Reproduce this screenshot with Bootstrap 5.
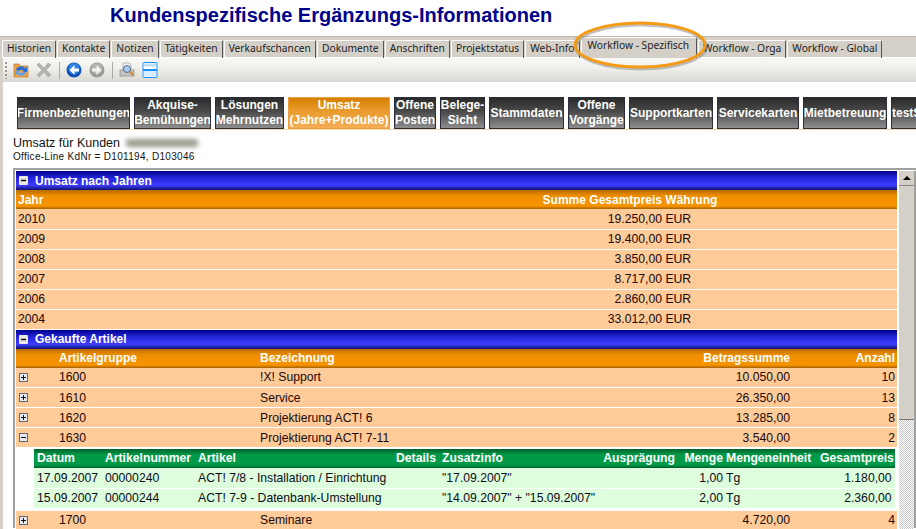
<!DOCTYPE html>
<html lang="de"><head><meta charset="utf-8"><title>Kundenspezifische Ergänzungs-Informationen</title>
<link href="https://cdn.jsdelivr.net/npm/bootstrap@5.3.0/dist/css/bootstrap.min.css" rel="stylesheet">
<style>
html,body{height:529px;overflow:hidden;background:#fff}
body{font:12px "Liberation Sans",Arial,sans-serif;color:#111;position:relative}
.page-title{font:bold 20px/1 "Liberation Sans",Arial,sans-serif;color:#00008b;margin:0;padding:5px 0 0 110px;height:36px}
.tabstrip{background:#d4d0c8;height:21px;padding:3px 0 0 2px;border-top:1px solid #bdb9af;flex-wrap:nowrap}
.tabstrip .nav-link{font:10.25px/14px "Noto Sans",sans-serif;color:#222;padding:0 4px;height:18px;margin-right:1px;border-top:1px solid #fff;border-left:1px solid #fff;border-right:1px solid #555;border-radius:2px 2px 0 0;white-space:nowrap}
.tabstrip .tab-on{margin:-3px 1px 0 0;height:21px;padding:1px 7px 0 6px;line-height:13px;background:#d4d0c8}
.shell{border-left:3px solid #d4d0c8;height:472px;overflow:hidden}
.toolrow{height:25px;background:linear-gradient(#f8f8f6,#eeeeea 45%,#d9d8d2);border-top:1px solid #fff;padding-left:2px}
.grip{width:2px;height:17px;margin-right:3px;background:repeating-linear-gradient(#999 0 2px,transparent 2px 4px)}
.tool{display:block;width:16px;height:16px;margin:0 3px}
.sep{width:1px;height:17px;background:#aaa;margin:0 3px}
.btnrow{padding:15px 0 0 14px;height:47px;gap:4px;flex-wrap:nowrap}
.menu-btn{flex:none;display:flex;align-items:center;justify-content:center;text-align:center;height:32px;padding:0;color:#fff;text-decoration:none;white-space:nowrap;overflow:hidden;font:bold 12px/15px "Liberation Sans",Arial,sans-serif;background:linear-gradient(#2b2b2b,#4a4a4a 45%,#8d8d8d);border:1px solid #2c2c3a;border-radius:0}
.menu-btn.on{background:linear-gradient(#d47f00,#e89a2a 40%,#f5ad55);border-color:#e8a040}
.b42{width:42px}.b45{width:45px}.b50{width:50px}.b57{width:57px}.b69{width:69px}.b75{width:75px}.b77{width:77px}.b82{width:82px}.b84{width:84px}.b102{width:102px}.b113{width:113px}
.rule{height:1px;background:#f2d9a8;margin-left:14px}
.cust{padding:6px 0 0 10px;height:38px}
.cust-name{font-size:12.5px;line-height:14px;display:flex;align-items:center}
.smudge{display:inline-block;width:72px;height:8px;margin-left:6px;background:#9a9a8e;filter:blur(2.5px);border-radius:3px}
.kd{font-size:10px;line-height:14px;letter-spacing:.3px}
.panel{margin-left:10px;border-top:2px solid #a0a0a0;border-left:2px solid #a0a0a0;height:360px;padding:1px 0 0 1px}
.scroll-col{width:17px;margin-left:2px;background:#d4d0c8;border-right:2px solid #a0a0a0}
.scroll-up{height:15px;border-bottom:1px solid #888;display:flex;align-items:center;justify-content:center}
.arrow{width:0;height:0;border:4px solid transparent;border-top:0;border-bottom:4px solid #000}
.thumb{height:234px;background:#d4d0c8;border-bottom:1px solid #777}
.track{height:200px;background:repeating-conic-gradient(#c8c8c8 0 25%,#fff 0 50%) 0 0/2px 2px}
.data{width:881px;flex:none}
.band{height:19px;line-height:18px;color:#fff;font-weight:bold;font-size:12px;background:linear-gradient(#00008a,#2424d8 35%,#3c3cff 75%,#10106a);padding-left:3px;display:flex;align-items:center;gap:7px}
.t{width:100%;table-layout:fixed;border-collapse:collapse;font-size:12.2px}
.t th{height:19px;padding:0;color:#fff;font-weight:bold;font-size:12px;line-height:1;background:linear-gradient(#b86a00,#ee8e00 30%,#f79400 85%,#a55f00);white-space:nowrap}
.t td{height:20px;padding:0;background:#fecb99;border-bottom:1px solid #fff;white-space:nowrap;color:#200808}
.s{display:block;margin-left:3px}
.nest-wrap{padding:1px 2px 2px 18px;background:#fff}
.nest th{font-size:12.2px;background:linear-gradient(#00602c,#009a48 30%,#009a48 85%,#005c2a)}
.nest td{background:#ddfddd;color:#0c0c20}
.ring{position:absolute;left:570px;top:18px;width:142px;height:56px;pointer-events:none}
.r{text-align:right}
.pe2{padding-right:2px!important}
.c2{width:2px}.c3{width:3px}.c6{width:6px}.c40{width:40px}.c43{width:43px}.c48{width:48px}.c68{width:68px}.c93{width:93px}.c94{width:94px}.c120{width:120px}.c130{width:130px}.c198{width:198px}.c201{width:201px}.c233{width:233px}.c400{width:400px}.c524{width:524px}
</style></head><body>
<h1 class="page-title">Kundenspezifische Ergänzungs-Informationen</h1>
<ul class="nav tabstrip">
<li class="nav-item"><a class="nav-link" href="#">Historien</a></li>
<li class="nav-item"><a class="nav-link" href="#">Kontakte</a></li>
<li class="nav-item"><a class="nav-link" href="#">Notizen</a></li>
<li class="nav-item"><a class="nav-link" href="#">Tätigkeiten</a></li>
<li class="nav-item"><a class="nav-link" href="#">Verkaufschancen</a></li>
<li class="nav-item"><a class="nav-link" href="#">Dokumente</a></li>
<li class="nav-item"><a class="nav-link" href="#">Anschriften</a></li>
<li class="nav-item"><a class="nav-link" href="#">Projektstatus</a></li>
<li class="nav-item"><a class="nav-link" href="#">Web-Info</a></li>
<li class="nav-item"><a class="nav-link tab-on" href="#">Workflow - Spezifisch</a></li>
<li class="nav-item"><a class="nav-link" href="#">Workflow - Orga</a></li>
<li class="nav-item"><a class="nav-link" href="#">Workflow - Global</a></li>
</ul>
<div class="shell">
<div class="toolrow d-flex align-items-center">
<span class="grip"></span>
<svg class="tool" viewBox="0 0 16 16"><path d="M1 2h5l1 2h8v11H1z" fill="#eda552" stroke="#c07820" stroke-width=".7"/><path d="M3 8a5 4 0 0 1 9-2l2-1v5H9l2-1a3 2 0 0 0-5 0z" fill="#2a6fd0"/><path d="M13 10a5 4 0 0 1-9 2l-2 1V9h5l-2 1a3 2 0 0 0 5 0z" fill="#5fa0e8"/></svg>
<svg class="tool ms-1" viewBox="0 0 16 16"><path d="M3 1l5 5 4-5 3 2-5 5 5 5-3 2-4-5-5 5-2-2 5-5-5-5z" fill="#b4b4ae" stroke="#999" stroke-width=".5"/></svg>
<span class="sep ms-1"></span>
<svg class="tool" viewBox="0 0 16 16"><circle cx="8" cy="8" r="7.500" fill="#0f55b8"/><circle cx="8" cy="6.500" r="5.500" fill="#2f83e4"/><path d="M8.500 3L3.500 8l5 5V9.500H13v-3H8.500z" fill="#fff"/></svg>
<svg class="tool ms-1" viewBox="0 0 16 16"><circle cx="8" cy="8" r="7.500" fill="#9a9a96"/><circle cx="8" cy="6.500" r="5.500" fill="#b4b4b0"/><path d="M7.500 3l5 5-5 5V9.500H3v-3h4.500z" fill="#f4f4f4"/></svg>
<span class="sep ms-1"></span>
<svg class="tool" viewBox="0 0 16 16"><path d="M4 1h6l2 2v5H4z" fill="#f4f4f4" stroke="#999" stroke-width=".7"/><rect x="1" y="8" width="14" height="6" fill="#c4c4c0" stroke="#888" stroke-width=".7"/><circle cx="8" cy="7" r="3.500" fill="#a9cdf0" stroke="#55708c"/><path d="M11 10l3 3" stroke="#d08030" stroke-width="2"/></svg>
<svg class="tool ms-1" viewBox="0 0 16 16"><rect x="1" y=".5" width="14" height="15" rx="1" fill="#fff" stroke="#1e90ff"/><rect x="2" y="1.500" width="12" height="3" fill="#bfe0ff"/><rect x="1" y="7" width="14" height="2" fill="#1e90ff"/><rect x="2" y="9" width="12" height="5.500" fill="#d8ecff"/></svg>
</div>
<div class="d-flex btnrow">
<a class="menu-btn b113" href="#">Firmenbeziehungen</a>
<a class="menu-btn b77" href="#">Akquise-<br>Bemühungen</a>
<a class="menu-btn b69" href="#">Lösungen<br>Mehrnutzen</a>
<a class="menu-btn on b102" href="#">Umsatz<br>(Jahre+Produkte)</a>
<a class="menu-btn b42" href="#">Offene<br>Posten</a>
<a class="menu-btn b45" href="#">Belege-<br>Sicht</a>
<a class="menu-btn b75" href="#">Stammdaten</a>
<a class="menu-btn b57" href="#">Offene<br>Vorgänge</a>
<a class="menu-btn b84" href="#">Supportkarten</a>
<a class="menu-btn b82" href="#">Servicekarten</a>
<a class="menu-btn b84" href="#">Mietbetreuung</a>
<a class="menu-btn justify-content-start b50" href="#">testS</a>
</div>
<div class="rule"></div>
<div class="cust">
<div class="cust-name">Umsatz für Kunden <span class="smudge"></span></div>
<div class="kd">Office-Line KdNr = D101194, D103046</div>
</div>
<div class="panel d-flex">
<div class="data">
<div class="band"><svg width="9" height="9" viewBox="0 0 9 9"><rect width="9" height="9" rx="1" fill="#e8e8e0"/><path d="M2 4.500h5" stroke="#111" stroke-width="1.500"/></svg><span>Umsatz nach Jahren</span></div>
<table class="t">
<colgroup><col class="c2"><col class="c524"><col class="c120"><col></colgroup>
<thead><tr><th></th><th>Jahr</th><th class="r">Summe Gesamtpreis</th><th>&nbsp;Währung</th></tr></thead>
<tbody>
<tr><td></td><td>2010</td><td class="r">19.250,00</td><td>&nbsp;EUR</td></tr>
<tr><td></td><td>2009</td><td class="r">19.400,00</td><td>&nbsp;EUR</td></tr>
<tr><td></td><td>2008</td><td class="r">3.850,00</td><td>&nbsp;EUR</td></tr>
<tr><td></td><td>2007</td><td class="r">8.717,00</td><td>&nbsp;EUR</td></tr>
<tr><td></td><td>2006</td><td class="r">2.860,00</td><td>&nbsp;EUR</td></tr>
<tr><td></td><td>2004</td><td class="r">33.012,00</td><td>&nbsp;EUR</td></tr>
</tbody></table>
<div class="band"><svg width="9" height="9" viewBox="0 0 9 9"><rect width="9" height="9" rx="1" fill="#e8e8e0"/><path d="M2 4.500h5" stroke="#111" stroke-width="1.500"/></svg><span>Gekaufte Artikel</span></div>
<table class="t">
<colgroup><col class="c43"><col class="c201"><col class="c400"><col class="c130"><col></colgroup>
<thead><tr><th></th><th>Artikelgruppe</th><th>Bezeichnung</th><th class="r">Betragssumme</th><th class="r pe2">Anzahl</th></tr></thead>
<tbody>
<tr><td><svg class="s" width="9" height="9" viewBox="0 0 9 9"><rect x=".5" y=".5" width="8" height="8" fill="#e8e8f0" stroke="#667"/><path d="M2 4.500h5M4.500 2v5" stroke="#111"/></svg></td><td>1600</td><td>!X! Support</td><td class="r">10.050,00</td><td class="r pe2">10</td></tr>
<tr><td><svg class="s" width="9" height="9" viewBox="0 0 9 9"><rect x=".5" y=".5" width="8" height="8" fill="#e8e8f0" stroke="#667"/><path d="M2 4.500h5M4.500 2v5" stroke="#111"/></svg></td><td>1610</td><td>Service</td><td class="r">26.350,00</td><td class="r pe2">13</td></tr>
<tr><td><svg class="s" width="9" height="9" viewBox="0 0 9 9"><rect x=".5" y=".5" width="8" height="8" fill="#e8e8f0" stroke="#667"/><path d="M2 4.500h5M4.500 2v5" stroke="#111"/></svg></td><td>1620</td><td>Projektierung ACT! 6</td><td class="r">13.285,00</td><td class="r pe2">8</td></tr>
<tr><td><svg class="s" width="9" height="9" viewBox="0 0 9 9"><rect x=".5" y=".5" width="8" height="8" fill="#e8e8f0" stroke="#667"/><path d="M2 4.500h5" stroke="#111"/></svg></td><td>1630</td><td>Projektierung ACT! 7-11</td><td class="r">3.540,00</td><td class="r pe2">2</td></tr>
</tbody></table>
<div class="nest-wrap">
<table class="t nest">
<colgroup><col class="c3"><col class="c68"><col class="c93"><col class="c198"><col class="c40"><col class="c6"><col class="c233"><col class="c48"><col class="c3"><col class="c94"><col></colgroup>
<thead><tr><th></th><th>Datum</th><th>Artikelnummer</th><th>Artikel</th><th class="r">Details</th><th></th><th>Zusatzinfo<span class="float-end">Ausprägung</span></th><th class="r">Menge</th><th></th><th>Mengeneinheit</th><th class="r">Gesamtpreis&nbsp;</th></tr></thead>
<tbody>
<tr><td></td><td>17.09.2007</td><td>00000240</td><td>ACT! 7/8 - Installation / Einrichtung</td><td></td><td></td><td>"17.09.2007"</td><td class="r">1,00</td><td></td><td>Tg</td><td class="r">1.180,00&nbsp;</td></tr>
<tr><td></td><td>15.09.2007</td><td>00000244</td><td>ACT! 7-9 - Datenbank-Umstellung</td><td></td><td></td><td>"14.09.2007" + "15.09.2007"</td><td class="r">2,00</td><td></td><td>Tg</td><td class="r">2.360,00&nbsp;</td></tr>
</tbody></table>
</div>
<table class="t">
<colgroup><col class="c43"><col class="c201"><col class="c400"><col class="c130"><col></colgroup>
<tbody><tr><td><svg class="s" width="9" height="9" viewBox="0 0 9 9"><rect x=".5" y=".5" width="8" height="8" fill="#e8e8f0" stroke="#667"/><path d="M2 4.500h5M4.500 2v5" stroke="#111"/></svg></td><td>1700</td><td>Seminare</td><td class="r">4.720,00</td><td class="r pe2">4</td></tr></tbody></table>
</div>
<div class="scroll-col">
<div class="scroll-up"><span class="arrow"></span></div>
<div class="thumb"></div>
<div class="track"></div>
</div>
</div>
</div>
<svg class="ring" viewBox="0 0 142 56"><ellipse cx="71" cy="29" rx="65" ry="22" fill="none" stroke="#777" stroke-opacity=".45" stroke-width="3"/><ellipse cx="70" cy="27" rx="65" ry="22" fill="none" stroke="#f59a12" stroke-width="2.800"/></svg>
</body></html>
